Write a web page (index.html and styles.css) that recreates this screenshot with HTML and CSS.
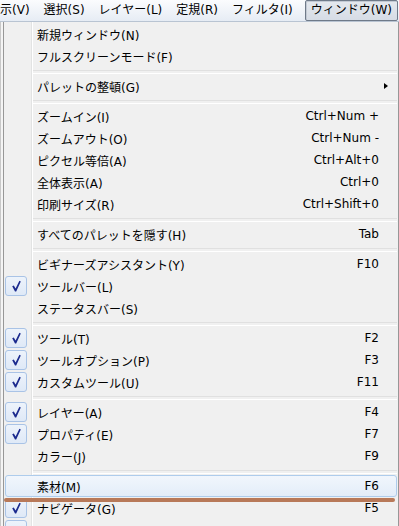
FILE: index.html
```html
<!DOCTYPE html>
<html lang="ja">
<head>
  <meta charset="UTF-8">
  <meta name="viewport" content="width=device-width, initial-scale=1.0">
  <title>ウィンドウ</title>
  <link rel="stylesheet" href="styles.css">
</head>
<body>
  <nav class="menubar">
    <span class="top-item first">示(V)</span>
    <span class="top-item">選択(S)</span>
    <span class="top-item">レイヤー(L)</span>
    <span class="top-item">定規(R)</span>
    <span class="top-item">フィルタ(I)</span>
    <span class="top-item open">ウィンドウ(W)</span>
  </nav>

  <div class="stage">
    <ul class="menu">
      <li class="item"><span class="check"></span><span class="label">新規ウィンドウ(N)</span></li>
      <li class="item"><span class="check"></span><span class="label">フルスクリーンモード(F)</span></li>
      <li class="sep"></li>
      <li class="item"><span class="check"></span><span class="label">パレットの整頓(G)</span><span class="arrow"></span></li>
      <li class="sep"></li>
      <li class="item"><span class="check"></span><span class="label">ズームイン(I)</span><span class="key">Ctrl+Num +</span></li>
      <li class="item"><span class="check"></span><span class="label">ズームアウト(O)</span><span class="key">Ctrl+Num -</span></li>
      <li class="item"><span class="check"></span><span class="label">ピクセル等倍(A)</span><span class="key">Ctrl+Alt+0</span></li>
      <li class="item"><span class="check"></span><span class="label">全体表示(A)</span><span class="key">Ctrl+0</span></li>
      <li class="item"><span class="check"></span><span class="label">印刷サイズ(R)</span><span class="key">Ctrl+Shift+0</span></li>
      <li class="sep"></li>
      <li class="item"><span class="check"></span><span class="label">すべてのパレットを隠す(H)</span><span class="key">Tab</span></li>
      <li class="sep"></li>
      <li class="item"><span class="check"></span><span class="label">ビギナーズアシスタント(Y)</span><span class="key">F10</span></li>
      <li class="item checked"><span class="check"><svg viewBox="0 0 20 18"><path d="M6.2 9.2 L7.8 8.4 L9.6 11.6 L13.4 3.8 L14.8 4.6 L10.2 14.4 L9.0 14.4 Z"/></svg></span><span class="label">ツールバー(L)</span></li>
      <li class="item"><span class="check"></span><span class="label">ステータスバー(S)</span></li>
      <li class="sep"></li>
      <li class="item checked"><span class="check"><svg viewBox="0 0 20 18"><path d="M6.2 9.2 L7.8 8.4 L9.6 11.6 L13.4 3.8 L14.8 4.6 L10.2 14.4 L9.0 14.4 Z"/></svg></span><span class="label">ツール(T)</span><span class="key">F2</span></li>
      <li class="item checked"><span class="check"><svg viewBox="0 0 20 18"><path d="M6.2 9.2 L7.8 8.4 L9.6 11.6 L13.4 3.8 L14.8 4.6 L10.2 14.4 L9.0 14.4 Z"/></svg></span><span class="label">ツールオプション(P)</span><span class="key">F3</span></li>
      <li class="item checked"><span class="check"><svg viewBox="0 0 20 18"><path d="M6.2 9.2 L7.8 8.4 L9.6 11.6 L13.4 3.8 L14.8 4.6 L10.2 14.4 L9.0 14.4 Z"/></svg></span><span class="label">カスタムツール(U)</span><span class="key">F11</span></li>
      <li class="sep"></li>
      <li class="item checked"><span class="check"><svg viewBox="0 0 20 18"><path d="M6.2 9.2 L7.8 8.4 L9.6 11.6 L13.4 3.8 L14.8 4.6 L10.2 14.4 L9.0 14.4 Z"/></svg></span><span class="label">レイヤー(A)</span><span class="key">F4</span></li>
      <li class="item checked"><span class="check"><svg viewBox="0 0 20 18"><path d="M6.2 9.2 L7.8 8.4 L9.6 11.6 L13.4 3.8 L14.8 4.6 L10.2 14.4 L9.0 14.4 Z"/></svg></span><span class="label">プロパティ(E)</span><span class="key">F7</span></li>
      <li class="item"><span class="check"></span><span class="label">カラー(J)</span><span class="key">F9</span></li>
      <li class="sep"></li>
      <li class="item hover"><span class="check"></span><span class="label">素材(M)</span><span class="key">F6</span></li>
      <li class="item checked"><span class="check"><svg viewBox="0 0 20 18"><path d="M6.2 9.2 L7.8 8.4 L9.6 11.6 L13.4 3.8 L14.8 4.6 L10.2 14.4 L9.0 14.4 Z"/></svg></span><span class="label">ナビゲータ(G)</span><span class="key">F5</span></li>
      <li class="item checked"><span class="check"></span><span class="label"></span></li>
    </ul>
    <div class="marker"></div>
  </div>
</body>
</html>
```

FILE: styles.css
```css
* {
  box-sizing: border-box;
}

body {
  margin: 0;
  width: 399px;
  height: 526px;
  overflow: hidden;
  background: #f4f4f4;
  font-family: "DejaVu Sans", "Noto Sans CJK JP", sans-serif;
  font-size: 12px;
  color: #000;
}

.menubar {
  display: flex;
  align-items: center;
  height: 22px;
  background: linear-gradient(#fbfcfe, #e6ecf4);
  border-bottom: 1px solid #b9c4d2;
}

.top-item {
  padding: 1px 6px;
  line-height: 17px;
  border: 1px solid transparent;
  border-radius: 2px;
}

.top-item.first {
  padding-left: 0;
  margin-left: -1px;
}

.top-item.open {
  margin-left: auto;
  margin-right: 1px;
  padding: 1px 5px;
  border-color: #6f7a89;
  background: linear-gradient(#e4e8ee, #d6dce5);
  box-shadow: inset 1px 1px 0 #c2c9d3;
}

.stage {
  position: relative;
  padding-left: 2px;
  border-left: 1px solid #c8c8c8;
}

.menu {
  list-style: none;
  margin: 0;
  padding: 1px 1px 0 1px;
  width: 396px;
  border-left: 1px solid #979797;
  border-right: 1px solid #979797;
  background:
    linear-gradient(to right, transparent 27px, #e2e3e3 27px, #e2e3e3 28px, #fff 28px, #fff 29px, transparent 29px),
    #f0f0f0;
}

.item {
  display: flex;
  align-items: center;
  height: 22px;
  border: 1px solid transparent;
  border-radius: 3px;
}

.check {
  flex: none;
  width: 22px;
  height: 20px;
  margin-left: -1px;
  border-radius: 3px;
}

.item.checked .check {
  border: 1px solid #a9c3e6;
  background: linear-gradient(#edf3fb, #dfe9f7);
}

.check svg {
  display: block;
  width: 20px;
  height: 18px;
  fill: #1b2a8e;
}

.label {
  flex: 1;
  padding-left: 10px;
  white-space: nowrap;
}

.key {
  padding-right: 17px;
  white-space: nowrap;
}

.arrow {
  width: 0;
  height: 0;
  margin-right: 8px;
  border-top: 3.5px solid transparent;
  border-bottom: 3.5px solid transparent;
  border-left: 4px solid #000;
}

.sep {
  height: 8px;
  margin-left: 28px;
  padding-top: 3px;
}

.sep::before {
  content: "";
  display: block;
  height: 2px;
  border-top: 1px solid #e0e0e0;
  border-bottom: 1px solid #fff;
}

.item.hover {
  border-color: #aeccec;
  background: linear-gradient(#f1f6fc, #e3edf9);
}

.marker {
  position: absolute;
  left: 3px;
  top: 476px;
  width: 391px;
  height: 4px;
  border-radius: 2px;
  background: #b87959;
}
```
